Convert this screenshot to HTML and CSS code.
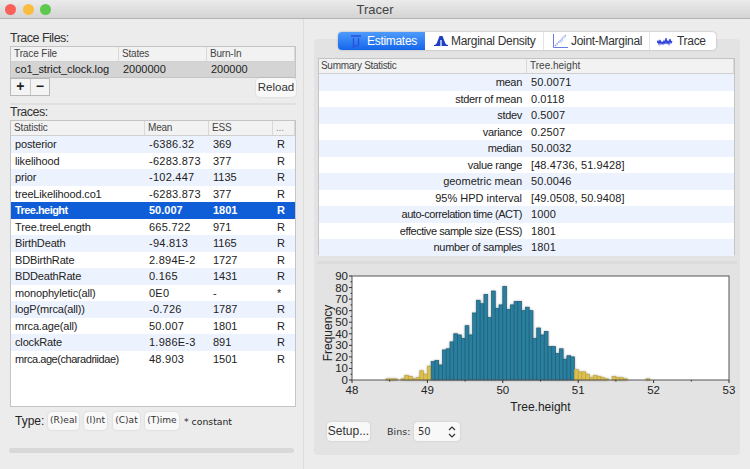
FILE: index.html
```html
<!DOCTYPE html>
<html lang="en">
<head>
	<meta charset="UTF-8">
	<title>Tracer</title>
	<link rel="stylesheet" href="styles.css">
</head>
<body>
	<header class="titlebar">
		<div class="lights"><i class="red"></i><i class="yellow"></i><i class="green"></i></div>
		<div class="title">Tracer</div>
	</header>
	<main class="window">
		<section class="left">
			<div class="label">Trace Files:</div>
			<div class="table files">
				<div class="row head"><span>Trace File</span><span>States</span><span>Burn-In</span></div>
				<div class="row sel-gray"><span>co1_strict_clock.log</span><span>2000000</span><span>200000</span></div>
			</div>
			<div class="filebar">
				<div class="plusminus"><b>+</b><b>&minus;</b></div>
				<div class="btn reload">Reload</div>
			</div>
			<div class="sep"></div>
			<div class="label">Traces:</div>
			<div class="table traces">
				<div class="row head"><span>Statistic</span><span>Mean</span><span>ESS</span><span>...</span></div>
				<div class="row"><span>posterior</span><span>-6386.32</span><span>369</span><span>R</span></div>
				<div class="row"><span>likelihood</span><span>-6283.873</span><span>377</span><span>R</span></div>
				<div class="row"><span>prior</span><span>-102.447</span><span>1135</span><span>R</span></div>
				<div class="row"><span>treeLikelihood.co1</span><span>-6283.873</span><span>377</span><span>R</span></div>
				<div class="row active"><span>Tree.height</span><span>50.007</span><span>1801</span><span>R</span></div>
				<div class="row"><span>Tree.treeLength</span><span>665.722</span><span>971</span><span>R</span></div>
				<div class="row"><span>BirthDeath</span><span>-94.813</span><span>1165</span><span>R</span></div>
				<div class="row"><span>BDBirthRate</span><span>2.894E-2</span><span>1727</span><span>R</span></div>
				<div class="row"><span>BDDeathRate</span><span>0.165</span><span>1431</span><span>R</span></div>
				<div class="row"><span>monophyletic(all)</span><span>0E0</span><span>-</span><span>*</span></div>
				<div class="row"><span>logP(mrca(all))</span><span>-0.726</span><span>1787</span><span>R</span></div>
				<div class="row"><span>mrca.age(all)</span><span>50.007</span><span>1801</span><span>R</span></div>
				<div class="row"><span>clockRate</span><span>1.986E-3</span><span>891</span><span>R</span></div>
				<div class="row squeeze"><span>mrca.age(charadriidae)</span><span>48.903</span><span>1501</span><span>R</span></div>
			</div>
			<div class="typebar">
				<span class="type-label">Type:</span>
				<span class="btn small t-real">(R)eal</span>
				<span class="btn small t-int">(I)nt</span>
				<span class="btn small t-cat">(C)at</span>
				<span class="btn small t-time">(T)ime</span>
				<span class="constant">* constant</span>
			</div>
			<div class="scrollbar"></div>
		</section>
		<section class="right">
			<div class="tabs">
				<div class="tab on">
					<svg width="10" height="13" viewBox="0 0 10 13"><path d="M0 1h10M2.500 3v10M7.500 3v8" fill="none" stroke="#2a4fd6" stroke-width="1.300"/><path d="M2.500 10c1 1.500 4 1.500 5 0" fill="none" stroke="#2a4fd6"/></svg>
					Estimates
				</div>
				<div class="tab">
					<svg width="14" height="10" viewBox="0 0 14 10"><path d="M0 10V9c2 0 3-2 4-5l1.500-4h3L10 4c1 3 2 5 4 5v1z" fill="#1d3fc4"/><path d="M7 4v6" stroke="#fff" stroke-width="1.200"/></svg>
					Marginal Density
				</div>
				<div class="tab">
					<svg width="15" height="14" viewBox="0 0 15 14"><path d="M.5 0v13.500H15" fill="none" stroke="#6a7ce6"/><path d="M2 12L13 1" stroke="#8f9df0" stroke-width="1.500" stroke-dasharray="1.500 .8"/><path d="M5 8l3-1M8 9l2-3M9 3l3 1" stroke="#c4ccf7"/></svg>
					Joint-Marginal
				</div>
				<div class="tab">
					<svg width="16" height="9" viewBox="0 0 16 9"><path d="M0 6l1-2 1 3 1-4 1 4 1-2 1 2 1-3 1 3 1-6 1 6 1-3 1 3 1-5 1 4 1-2" fill="none" stroke="#2338d8" stroke-width="1.100"/></svg>
					Trace
				</div>
			</div>
			<div class="panel">
				<div class="table summary">
					<div class="row head"><span>Summary Statistic</span><span>Tree.height</span></div>
					<div class="row"><span>mean</span><span>50.0071</span></div>
					<div class="row"><span>stderr of mean</span><span>0.0118</span></div>
					<div class="row"><span>stdev</span><span>0.5007</span></div>
					<div class="row"><span>variance</span><span>0.2507</span></div>
					<div class="row"><span>median</span><span>50.0032</span></div>
					<div class="row"><span>value range</span><span>[48.4736, 51.9428]</span></div>
					<div class="row wide"><span>geometric mean</span><span>50.0046</span></div>
					<div class="row wide"><span>95% HPD interval</span><span>[49.0508, 50.9408]</span></div>
					<div class="row squeeze"><span>auto-correlation time (ACT)</span><span>1000</span></div>
					<div class="row squeeze"><span>effective sample size (ESS)</span><span>1801</span></div>
					<div class="row"><span>number of samples</span><span>1801</span></div>
				</div>
				<div class="split"></div>
				<svg id="chart" class="chart" width="422" height="150" viewBox="318 264 422 150">
					<rect x="352" y="276" width="377" height="104" fill="#fff"/>
					<g id="bars" class="bars"></g>
					<rect x="352" y="276" width="377" height="104" fill="none" stroke="#555"/>
					<path id="ticks" fill="none" stroke="#333"/>
					<g id="ylabels" class="tick-text" text-anchor="end"></g>
					<g id="xlabels" class="tick-text" text-anchor="middle"></g>
					<text class="axis-text" x="540.500" y="411" text-anchor="middle">Tree.height</text>
					<text class="axis-text" transform="translate(332 333) rotate(-90)" text-anchor="middle">Frequency</text>
				</svg>
				<div class="chartbar">
					<div class="btn setup">Setup...</div>
					<span class="bins">Bins:</span>
					<div class="btn select">50<svg width="8" height="12" viewBox="0 0 8 12"><path d="M1 4l3-3 3 3M1 8l3 3 3-3" fill="none" stroke="#333" stroke-width="1.200"/></svg></div>
				</div>
			</div>
		</section>
	</main>
	<script src="chart.js"></script>
</body>
</html>
```

FILE: styles.css
```css
*{margin: 0; padding: 0; box-sizing: border-box;}
html,body{height: 100%; overflow: hidden;}
body{width: 750px; height: 469px; background: #ececec; color: #222; font: 11px "Liberation Sans", Arial, sans-serif;}
.titlebar{height: 19px; background: linear-gradient(#ebebeb, #d4d4d4); border-bottom: 1px solid #b4b4b4; display: flex; align-items: center; position: relative;}
.lights{display: flex; gap: 6.500px; padding: 1px 0 0 5px;}
.lights i{width: 11px; height: 11px; border-radius: 50%; display: block;}
.lights .red{background: #f9605a;}
.lights .yellow{background: #fbbd3f;}
.lights .green{background: #5fc84e;}
.title{position: absolute; left: 0; right: 0; text-align: center; font-size: 13px; color: #444;}
.window{display: flex; height: 450px;}
.left{width: 304px; border-right: 1px solid #dcdcdc; padding: 12px 7px 0 10px;}
.label{font-size: 12.500px; line-height: 14px; letter-spacing: -.5px; color: #333;}
.table{background: #fff; border: 1px solid #c4c4c4;}
.row{display: flex; height: 16.500px; line-height: 16px;}
.row span{display: block; padding-left: 4px; white-space: nowrap; overflow: hidden;}
.table .head{height: 15px; line-height: 14px; font-size: 10px; letter-spacing: -.2px; background: #f2f2f2; border-bottom: 1px solid #d0d0d0; color: #444;}
.table .head span{border-right: 1px solid #d8d8d8; padding-left: 3px;}
.files{margin-top: 1px;}
.files .row span:nth-child(1){width: 108px; letter-spacing: -.1px;}
.files .row span:nth-child(2){width: 88px;}
.files .row span:nth-child(3){flex: 1;}
.files .sel-gray{background: #d4d4d4; height: 15px; line-height: 15px;}
.filebar{display: flex; justify-content: space-between; align-items: flex-start; height: 25px;}
.plusminus{display: flex; width: 40px; height: 18px; border: 1px solid #b8b8b8; background: #f4f4f4;}
.plusminus b{flex: 1; text-align: center; line-height: 15px; font-size: 14px; color: #222;}
.plusminus b:first-child{border-right: 1px solid #c8c8c8;}
.btn{background: #f8f8f8; border-radius: 4px; box-shadow: 0 0 2px rgba(0,0,0,.15); color: #333;}
.reload{width: 40px; height: 19px; line-height: 19px; text-align: center; font-size: 11.500px;}
.sep{height: 2px; background: #e0e0e0;}
.traces{height: 287px; margin-top: 1px;}
.traces .row:nth-child(even){background: #edf3fe;}
.traces .row span:nth-child(1){width: 134px; letter-spacing: -.15px;}
.traces .row span:nth-child(2){width: 64px; letter-spacing: .25px;}
.traces .row span:nth-child(3){width: 64px;}
.traces .row span:nth-child(4){flex: 1;}
.traces .head span:nth-child(2){letter-spacing: -.2px;}
.traces .head span:nth-child(4){color: #888;}
.traces .row.active{background: #0f5ed8; color: #fff; font-weight: bold;}
.traces .row.active span:nth-child(1){letter-spacing: -.55px;}
.traces .row.active span:nth-child(2){letter-spacing: 0;}
.traces .row.squeeze span:nth-child(1){letter-spacing: -.45px;}
.typebar{display: flex; align-items: center; margin-top: 5px; height: 18px; padding-left: 5px; font-family: "DejaVu Sans", sans-serif; font-size: 9px;}
.type-label{font: 12px "Liberation Sans", Arial, sans-serif; width: 33px;}
.small{height: 18px; line-height: 17px; text-align: center; margin-right: 5px; white-space: nowrap;}
.t-real{width: 31px;}
.t-int{width: 23px; margin-right: 6px;}
.t-cat{width: 27px;}
.t-time{width: 34px;}
.constant{font-size: 9.300px;}
.scrollbar{height: 5px; margin: 18px 2px 0 -1px; background: #d8d8d8; border-radius: 3px;}
.right{flex: 1; padding: 13px 10px 0 10px; position: relative;}
.tabs{position: absolute; top: 13px; left: 34px; width: 378px; height: 18px; display: flex; background: #fff; border-radius: 4px; box-shadow: 0 0 2px rgba(0,0,0,.3); z-index: 1; font-size: 12px; letter-spacing: -.3px;}
.tab{display: flex; align-items: center; gap: 4px; padding-left: 9px; border-right: 1px solid #e4e4e4; color: #333;}
.tab:nth-child(1){width: 87px; padding-left: 13px; gap: 6px; background: linear-gradient(#4e9bfb, #1466ec); color: #fff; border-radius: 4px 0 0 4px; border: 0;}
.tab:nth-child(2){width: 119px; gap: 3px;}
.tab:nth-child(3){width: 106px; gap: 3px;}
.tab:nth-child(4){width: 66px; border: 0; padding-left: 7px;}
.panel{height: 416px; margin-top: 7px; background: #e3e3e3; border-radius: 4px; padding-top: 12px;}
.summary{margin: 7px 5px 0 4px; height: 197px;}
.summary .row:nth-child(even){background: #edf3fe;}
.summary .row span:nth-child(1){width: 208px; text-align: right; padding-right: 5px; letter-spacing: -.3px;}
.summary .row span:nth-child(2){flex: 1; letter-spacing: .1px;}
.summary .row.wide span:nth-child(1){letter-spacing: 0;}
.summary .row.squeeze span:nth-child(1){letter-spacing: -.45px;}
.summary .head span:nth-child(1){text-align: left; padding-left: 2px; letter-spacing: -.3px;}
.summary .head span:nth-child(2){letter-spacing: 0;}
.split{height: 3px; background: #dcdcdc; margin: 6px 3px 0;}
.chart{display: block; margin-left: 4px;}
.bars{filter: drop-shadow(0 0 1px rgba(90,90,90,.5));}
.tick-text,.axis-text{font-family: "Liberation Sans", Arial, sans-serif; fill: #222;}
.tick-text{font-size: 11.500px;}
.axis-text{font-size: 12px;}
.chartbar{display: flex; align-items: center; height: 19px; margin-top: 8px; padding-left: 13px;}
.setup{width: 43px; height: 19px; line-height: 19px; text-align: center; font-size: 12px;}
.bins{margin-left: 17px; width: 27px; font: 9.500px "DejaVu Sans", sans-serif; color: #333;}
.select{width: 46px; height: 19px; display: flex; justify-content: space-between; align-items: center; padding: 0 4px; font: 10px "DejaVu Sans", sans-serif;}
```

FILE: chart.js
```js
// histogram counts in 0.05 bins starting at 48.45
var counts = [1,1,1,0,1,4,3,1,2,8,5,12,
	16,17,13,26,27,33,40,39,36,47,39,58,69,66,74,54,77,62,65,81,61,65,68,68,60,63,60,36,45,39,42,29,29,23,27,18,21,20,
	9,7,7,5,2,4,3,2,1,0,3,2,2,1,0,0,0,0,0,1];
var pxX = 75.4, pxY = 104 / 90;
var svgNS = 'http://www.w3.org/2000/svg';

function el(parent, name, attrs, text){
	var e = document.createElementNS(svgNS, name);
	for(var k in attrs) e.setAttribute(k, attrs[k]);
	if(text !== undefined) e.textContent = text;
	parent.appendChild(e);
}

var bars = document.getElementById('bars');
counts.forEach(function(c, i){
	if(!c) return;
	var v = 48.45 + i * 0.05;
	var blue = v > 49.04 && v < 50.94;
	el(bars, 'rect', {
		x: 352 + (v - 48) * pxX,
		y: 380 - c * pxY,
		width: 0.05 * pxX,
		height: c * pxY,
		fill: blue ? '#2a7f9f' : '#dcbf4e',
		stroke: blue ? '#1d6079' : '#c4a83c',
		'stroke-width': 0.7
	});
});

var d = '';
for(var i = 0; i <= 18; i++){
	var y = 380 - i * 5 * pxY;
	d += 'M352 ' + y + 'h-' + (i % 2 ? 1.5 : 3);
}
for(var j = 0; j <= 10; j++){
	var x = 352 + j * 0.5 * pxX;
	d += 'M' + x + ' 380v' + (j % 2 ? 1.5 : 3);
}
document.getElementById('ticks').setAttribute('d', d);

var yl = document.getElementById('ylabels');
for(var n = 0; n <= 90; n += 10) el(yl, 'text', {x: 348, y: 384 - n * pxY}, n);
var xl = document.getElementById('xlabels');
for(var m = 48; m <= 53; m++) el(xl, 'text', {x: 352 + (m - 48) * pxX, y: 394}, m);
```
